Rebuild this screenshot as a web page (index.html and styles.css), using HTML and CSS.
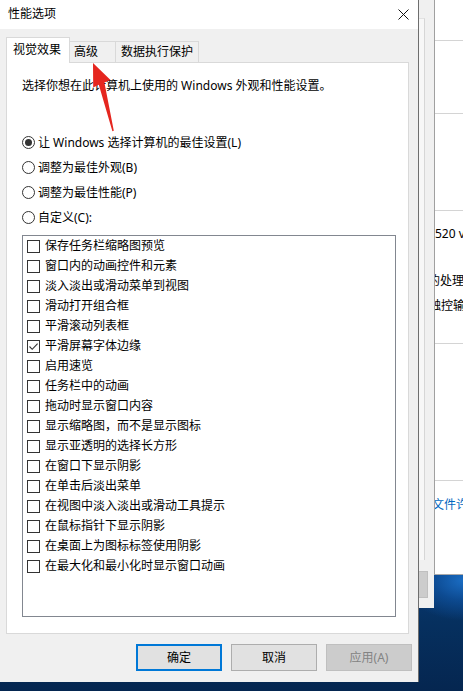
FILE: index.html
```html
<!DOCTYPE html>
<html lang="zh-CN">
<head>
<meta charset="utf-8">
<title>性能选项</title>
<link rel="stylesheet" href="styles.css">
</head>
<body>
<div class="stage">
  <div class="dialog">
    <div class="titlebar">
      <span class="title">性能选项</span>
      <svg class="close" width="11" height="11" viewBox="0 0 11 11"><path d="M0.5 0.5L10.5 10.5M10.5 0.5L0.5 10.5" stroke="#111" stroke-width="1" fill="none"/></svg>
    </div>
    <div class="body">
      <div class="tabs">
        <div class="tab tab-active">视觉效果</div>
        <div class="tab tab-2">高级</div>
        <div class="tab tab-3">数据执行保护</div>
      </div>
      <div class="panel">
        <p class="desc">选择你想在此计算机上使用的 Windows 外观和性能设置。</p>
        <div class="radios">
          <div class="radio-row"><span class="radio on"></span><span>让 Windows 选择计算机的最佳设置(L)</span></div>
          <div class="radio-row"><span class="radio"></span><span>调整为最佳外观(B)</span></div>
          <div class="radio-row"><span class="radio"></span><span>调整为最佳性能(P)</span></div>
          <div class="radio-row"><span class="radio"></span><span>自定义(C):</span></div>
        </div>
        <div class="list">
          <div class="item"><span class="cb"></span><span>保存任务栏缩略图预览</span></div>
          <div class="item"><span class="cb"></span><span>窗口内的动画控件和元素</span></div>
          <div class="item"><span class="cb"></span><span>淡入淡出或滑动菜单到视图</span></div>
          <div class="item"><span class="cb"></span><span>滑动打开组合框</span></div>
          <div class="item"><span class="cb"></span><span>平滑滚动列表框</span></div>
          <div class="item"><span class="cb checked"><svg width="11" height="11" viewBox="0 0 11 11"><path d="M1.5 5.5L4.2 8.3L9.6 2.6" stroke="#333" stroke-width="1.1" fill="none"/></svg></span><span>平滑屏幕字体边缘</span></div>
          <div class="item"><span class="cb"></span><span>启用速览</span></div>
          <div class="item"><span class="cb"></span><span>任务栏中的动画</span></div>
          <div class="item"><span class="cb"></span><span>拖动时显示窗口内容</span></div>
          <div class="item"><span class="cb"></span><span>显示缩略图，而不是显示图标</span></div>
          <div class="item"><span class="cb"></span><span>显示亚透明的选择长方形</span></div>
          <div class="item"><span class="cb"></span><span>在窗口下显示阴影</span></div>
          <div class="item"><span class="cb"></span><span>在单击后淡出菜单</span></div>
          <div class="item"><span class="cb"></span><span>在视图中淡入淡出或滑动工具提示</span></div>
          <div class="item"><span class="cb"></span><span>在鼠标指针下显示阴影</span></div>
          <div class="item"><span class="cb"></span><span>在桌面上为图标标签使用阴影</span></div>
          <div class="item"><span class="cb"></span><span>在最大化和最小化时显示窗口动画</span></div>
        </div>
      </div>
      <div class="buttons">
        <div class="btn btn-default">确定</div>
        <div class="btn">取消</div>
        <div class="btn btn-disabled">应用(A)</div>
      </div>
    </div>
  </div>

  <div class="behind">
    <div class="behind-panel"></div>
    <div class="behind-btn"></div>
  </div>

  <div class="win">
    <div class="sec sec-1"></div>
    <div class="sec sec-2"></div>
    <div class="sec sec-3"></div>
    <div class="sec sec-4">
      <div class="wtext t-a">520 v</div>
      <div class="wtext t-b">的处理器</div>
      <div class="wtext t-c">触控输入</div>
    </div>
    <div class="sec sec-5"></div>
    <div class="sec sec-6">
      <div class="wtext wlink">文件许可</div>
    </div>
  </div>

  <svg class="arrow" width="463" height="691" viewBox="0 0 463 691">
    <polygon points="93,63 110.5,80 104.4,82.6 113.8,130.7 112.4,131.2 98.8,84.8 93.2,87.5" fill="#e5261f"/>
  </svg>
</div>
</body>
</html>
```

FILE: styles.css
```css
* {
  box-sizing: border-box;
}

html, body {
  margin: 0;
  padding: 0;
}

body {
  font-family: "Noto Sans", "Noto Sans CJK SC", sans-serif;
  font-size: 12px;
  color: #000;
  background: #062b5a;
}

.stage {
  position: relative;
  width: 463px;
  height: 691px;
  overflow: hidden;
  display: flex;
  align-items: flex-start;
  background:
    radial-gradient(ellipse 60px 40px at 100% 84%, #1a6cc2 0%, rgba(16, 88, 170, 0.6) 50%, rgba(10, 60, 120, 0) 100%),
    linear-gradient(180deg, #0a4388 0%, #0a3b78 82%, #06305f 90%, #052650 100%);
}

/* ---------- dialog ---------- */
.dialog {
  width: 419px;
  height: 682px;
  flex: none;
  background: #f0f0f0;
  border-right: 1px solid #6e6e6e;
  display: flex;
  flex-direction: column;
}

.titlebar {
  height: 29px;
  background: #fff;
  display: flex;
  align-items: center;
  padding: 0 9px 1px 8px;
  flex: none;
}

.title {
  line-height: 16px;
}

.close {
  margin-left: auto;
  display: block;
}

.body {
  flex: 1;
  padding: 8px 0 0 6px;
  display: flex;
  flex-direction: column;
}

/* tabs */
.tabs {
  display: flex;
  align-items: flex-end;
  height: 25px;
  flex: none;
}

.tab {
  height: 21px;
  line-height: 20px;
  background: #f0f0f0;
  border-top: 1px solid #d9d9d9;
  border-right: 1px solid #d9d9d9;
  padding-left: 4px;
  white-space: nowrap;
}

.tab-active {
  position: relative;
  z-index: 1;
  width: 64px;
  height: 26px;
  margin-bottom: -1px;
  line-height: 24px;
  background: #fff;
  border-left: 1px solid #d9d9d9;
  padding-left: 6px;
}

.tab-2 {
  width: 46px;
}

.tab-3 {
  width: 83px;
  padding-left: 5px;
}

/* panel */
.panel {
  width: 403px;
  height: 572px;
  flex: none;
  background: #fff;
  border: 1px solid #d9d9d9;
  padding: 13px 0 0 15px;
}

.desc {
  margin: 0;
  line-height: 20px;
}

.radios {
  margin-top: 34px;
}

.radio-row {
  height: 25px;
  display: flex;
  align-items: center;
  gap: 3px;
  line-height: 16px;
}

.radio {
  width: 13px;
  height: 13px;
  flex: none;
  border: 1px solid #333;
  border-radius: 50%;
  background: #fff;
  display: flex;
  align-items: center;
  justify-content: center;
}

.radio.on::after {
  content: "";
  width: 7px;
  height: 7px;
  border-radius: 50%;
  background: #333;
}

.list {
  margin-top: 5px;
  width: 374px;
  height: 382px;
  border: 1px solid #828790;
  padding-left: 4px;
}

.item {
  height: 20px;
  display: flex;
  align-items: center;
  gap: 5px;
  line-height: 16px;
}

.cb {
  width: 13px;
  height: 13px;
  flex: none;
  border: 1px solid #333;
  background: #fff;
  display: flex;
  align-items: center;
  justify-content: center;
}

.cb svg {
  display: block;
}

/* buttons */
.buttons {
  display: flex;
  gap: 9px;
  margin-top: 10px;
  padding-left: 130px;
}

.btn {
  width: 86px;
  height: 27px;
  background: #e1e1e1;
  border: 1px solid #adadad;
  display: flex;
  align-items: center;
  justify-content: center;
  line-height: 16px;
}

.btn-default {
  border: 2px solid #0078d7;
}

.btn-disabled {
  background: #cccccc;
  border-color: #bfbfbf;
  color: #838383;
}

/* ---------- windows behind ---------- */
.behind {
  width: 15px;
  height: 608px;
  flex: none;
  background: #f0f0f0;
  display: flex;
  flex-direction: column;
}

.behind-panel {
  width: 6px;
  height: 542px;
  margin-top: 18px;
  background: #f7f7f7;
  border-right: 1px solid #d6d6d6;
  border-top: 1px solid #e2e2e2;
}

.behind-btn {
  width: 9px;
  height: 27px;
  margin-top: 11px;
  background: #cccccc;
  border: 1px solid #bfbfbf;
  border-left: none;
}

.win {
  width: 29px;
  height: 575px;
  flex: none;
  background: #fff;
  border-left: 1px solid #a0a0a0;
  border-bottom: 1px solid #a9a9a9;
  overflow: hidden;
}

.sec {
  border-bottom: 1px solid #d4d4d4;
}

.sec-1 { height: 41px; }
.sec-2 { height: 73px; }
.sec-3 { height: 97px; }
.sec-4 { height: 133px; padding-top: 15px; }
.sec-5 { height: 137px; }
.sec-6 { border-bottom: none; padding-top: 16px; }

.wtext {
  line-height: 16px;
  white-space: nowrap;
}

.t-a { margin-left: 0; }
.t-b { margin-left: -7px; margin-top: 31px; }
.t-c { margin-left: -6px; margin-top: 9px; }

.wlink {
  color: #0067c0;
  margin-left: -3px;
}

/* ---------- annotation arrow (overlay) ---------- */
.arrow {
  position: absolute;
  left: 0;
  top: 0;
  pointer-events: none;
}
```
